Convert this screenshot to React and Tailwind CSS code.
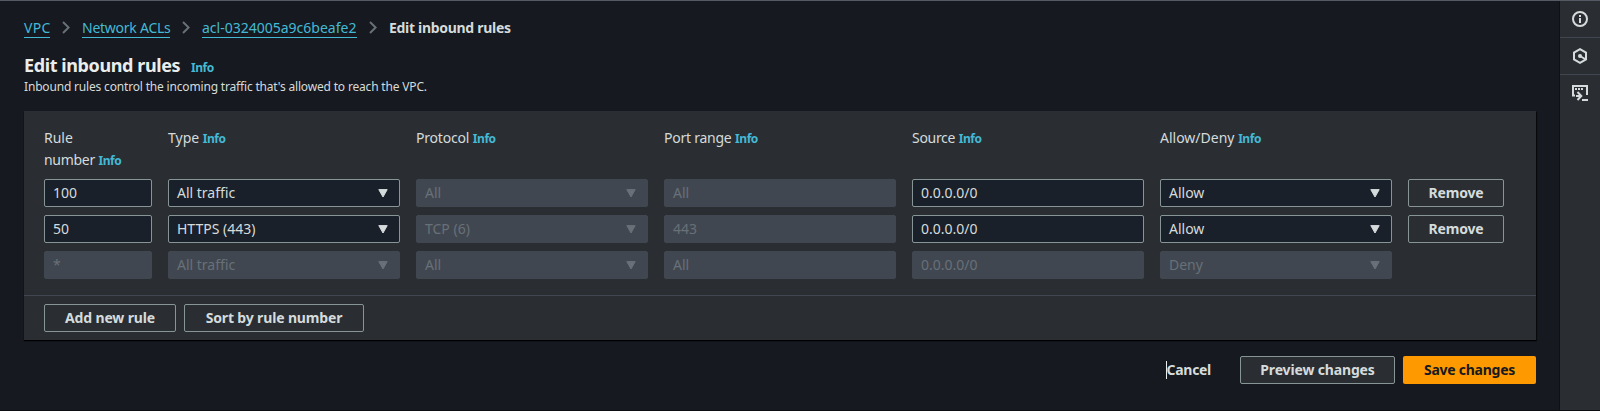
const TONE = {
  active: "border-[#879596] bg-[#1a2029] text-[#d5dbdb]",
  disabled: "border-[#414750] bg-[#414750] text-[#687078]",
};

function Info() {
  return <a className="text-[12px] font-bold tracking-[-0.45px] text-[#44b9d6]">Info</a>;
}

function Caret() {
  return (
    <svg width="10" height="9" viewBox="0 0 10 9" className="shrink-0">
      <path d="M0.8 0.6h8.4L5 8z" fill="currentColor" stroke="currentColor" strokeLinejoin="round" />
    </svg>
  );
}

function Field({ children, disabled, select }) {
  return (
    <div
      className={`flex h-7 items-center justify-between rounded-[2px] border pr-[11px] pl-2 text-[14px] leading-[22px] ${disabled ? TONE.disabled : TONE.active}`}
    >
      <span>{children}</span>
      {select && <Caret />}
    </div>
  );
}

function Button({ children, className = "" }) {
  return (
    <button
      className={`flex h-7 items-center justify-center rounded-[2px] border border-[#879596] bg-[#2a2e33] text-[14px] leading-[22px] font-bold tracking-[-0.15px] whitespace-nowrap text-[#d5dbdb] ${className}`}
    >
      {children}
    </button>
  );
}

function Chevron() {
  return (
    <svg width="8" height="13" viewBox="0 0 8 13" className="mx-3 shrink-0" fill="none" stroke="#687078" strokeWidth="2">
      <path d="M1 1l5.6 5.5L1 12" />
    </svg>
  );
}

function Crumb({ children, className }) {
  return (
    <a className={`flex h-[21px] items-center border-b border-[#44b9d6] text-[14px] text-[#44b9d6] whitespace-nowrap ${className}`}>
      {children}
    </a>
  );
}

const HEADERS = [
  { label: "Type", spacing: "tracking-normal" },
  { label: "Protocol", spacing: "tracking-[-0.2px]" },
  { label: "Port range", spacing: "tracking-[-0.25px]" },
  { label: "Source", spacing: "tracking-[-0.3px]" },
  { label: "Allow/Deny", spacing: "tracking-normal" },
];

const ROWS = [
  { num: "100", type: "All traffic", protocol: "All", port: "All", action: "Allow" },
  { num: "50", type: "HTTPS (443)", protocol: "TCP (6)", port: "443", action: "Allow" },
  { num: "*", type: "All traffic", protocol: "All", port: "All", action: "Deny", locked: true },
];

const GRID = "grid grid-cols-[108px_repeat(5,232px)_96px] gap-x-4";

function SideItem({ children, className }) {
  return <div className={`flex items-center justify-center text-[#d5dbdb] ${className}`}>{children}</div>;
}

export default function App() {
  return (
    <div className="flex h-[411px] w-[1600px] overflow-hidden border-t border-b border-t-[#545b64] border-b-[#0b0d11] bg-[#16191f] font-['Noto_Sans',sans-serif] text-[#d5dbdb]">
      <main className="w-[1559px] pr-[23px] pl-6">
        <nav className="mt-4 flex h-[21px] items-center">
          <Crumb className="w-[26px] tracking-[0.3px]">VPC</Crumb>
          <Chevron />
          <Crumb className="w-[88px] tracking-[-0.25px]">Network ACLs</Crumb>
          <Chevron />
          <Crumb className="w-[155px]">acl-0324005a9c6beafe2</Crumb>
          <Chevron />
          <span className="text-[14px] font-bold tracking-[-0.3px] whitespace-nowrap">Edit inbound rules</span>
        </nav>
        <div className="mt-4 flex h-[22px] items-baseline">
          <h1 className="w-[167px] text-[18px] leading-[22px] font-bold tracking-[-0.4px] whitespace-nowrap text-[#eaeded]">
            Edit inbound rules
          </h1>
          <Info />
        </div>
        <p className="mt-[3px] text-[12px] leading-4 tracking-[-0.175px] whitespace-nowrap">
          Inbound rules control the incoming traffic that's allowed to reach the VPC.
        </p>

        <section className="mt-4 h-[229px] bg-[#2a2e33] shadow-[0_1px_1px_0_#000,1px_1px_1px_0_#0008]">
          <div className="h-[185px] border-b border-[#414750] px-5 pt-4">
            <div className={`${GRID} h-[52px] text-[14px] leading-[22px]`}>
              <div>
                Rule
                <br />
                <span className="tracking-[-0.3px]">number</span> <Info />
              </div>
              {HEADERS.map((h) => (
                <div key={h.label}>
                  <span className={h.spacing}>{h.label}</span> <Info />
                </div>
              ))}
            </div>
            <div className="flex flex-col gap-2">
              {ROWS.map((r) => (
                <div key={r.num} className={GRID}>
                  <Field disabled={r.locked}>{r.num}</Field>
                  <Field disabled={r.locked} select>{r.type}</Field>
                  <Field disabled select>{r.protocol}</Field>
                  <Field disabled>{r.port}</Field>
                  <Field disabled={r.locked}>0.0.0.0/0</Field>
                  <Field disabled={r.locked} select>{r.action}</Field>
                  {!r.locked && <Button>Remove</Button>}
                </div>
              ))}
            </div>
          </div>
          <div className="flex gap-2 px-5 pt-2">
            <Button className="w-[132px]">Add new rule</Button>
            <Button className="w-[180px]">Sort by rule number</Button>
          </div>
        </section>

        <div className="mt-4 flex justify-end">
          <div className="mr-[29px] flex h-7 items-center text-[14px] leading-[22px] font-bold tracking-[-0.3px]">
            <span className="h-[18px] w-px bg-[#eaeded]" />
            Cancel
          </div>
          <Button className="mr-2 w-[155px]">Preview changes</Button>
          <button className="flex h-7 w-[133px] items-center justify-center rounded-[2px] bg-[#ff9900] text-[14px] leading-[22px] font-bold tracking-[-0.25px] text-[#16191f]">
            Save changes
          </button>
        </div>
      </main>
      <aside className="w-[41px] border-l border-[#0e1116] bg-[#2a2e33]">
        <SideItem className="h-[37px] border-b border-[#414750]">
          <svg width="16" height="16" viewBox="0 0 16 16" fill="none" stroke="currentColor" strokeWidth="2">
            <circle cx="8" cy="8" r="7" />
            <path d="M8 7v5M8 4v2" />
          </svg>
        </SideItem>
        <SideItem className="h-[37px] border-b border-[#414750]">
          <svg width="16" height="16" viewBox="0 0 16 16" fill="none" stroke="currentColor" strokeWidth="2">
            <path d="M8 1.2l6 3.4v6.8l-6 3.4-6-3.4V4.6zM8 8l5 3" />
            <circle cx="8" cy="8" r="2" fill="currentColor" stroke="none" />
          </svg>
        </SideItem>
        <SideItem className="h-9">
          <svg width="16" height="16" viewBox="0 0 16 16" fill="none" stroke="currentColor" strokeWidth="2">
            <path d="M3 10.5H1V1h14v9M4 11h5M5.5 7l3.8 4-3.8 4M10 15h6" />
            <path d="M3 4h8" strokeDasharray="2 1" />
          </svg>
        </SideItem>
      </aside>
    </div>
  );
}
